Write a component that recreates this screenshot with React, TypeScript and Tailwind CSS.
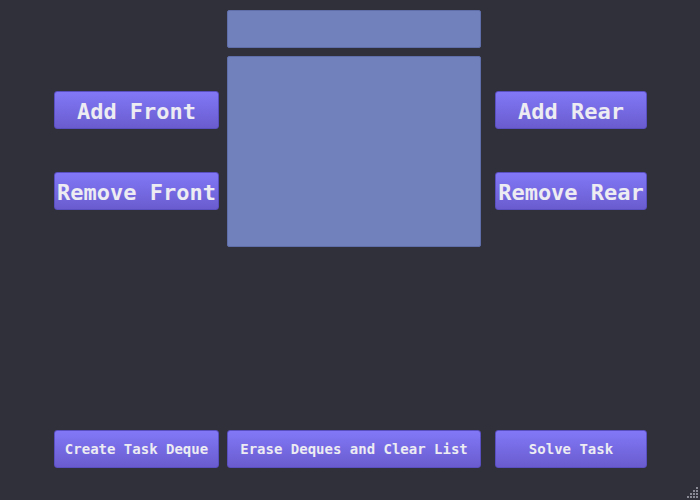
import React from 'react';

const mono = { fontFamily: '"DejaVu Sans Mono", "Liberation Mono", monospace' };

function DequeButton({
  label,
  width,
  size = 'lg',
}: {
  label: string;
  width: string;
  size?: 'lg' | 'sm';
}) {
  return (
    <button
      style={mono}
      className={`${width} flex h-[38px] items-center justify-center whitespace-nowrap rounded-[3px] border border-[#5a4fc0] bg-gradient-to-b from-[#8278f7] to-[#6a5ccf] font-bold text-[#ececf2] ${
        size === 'lg' ? 'pt-[2px] text-[22px]' : 'text-[14px]'
      }`}
    >
      {label}
    </button>
  );
}

function ResizeGrip() {
  const dots: [number, number][] = [];
  for (let r = 0; r < 4; r++) {
    for (let c = 3 - r; c < 4; c++) dots.push([c * 3, r * 3]);
  }
  return (
    <svg width="12" height="12" className="absolute bottom-[1px] right-[1px]">
      {dots.map(([x, y], i) => (
        <rect key={i} x={x} y={y} width="2" height="2" fill="#8a8a96" />
      ))}
    </svg>
  );
}

export default function App() {
  return (
    <div className="relative flex h-[500px] w-[700px] flex-col bg-[#30303a]">
      <div className="flex pl-[54px] pt-[10px]">
        <div className="flex flex-col gap-[43px] pt-[81px]">
          <DequeButton label="Add Front" width="w-[165px]" />
          <DequeButton label="Remove Front" width="w-[165px]" />
        </div>

        <div className="ml-[8px] flex flex-col gap-[8px]">
          <div className="h-[38px] w-[254px] rounded-[2px] border border-[#5f6ea8] bg-[#7181bb]" />
          <div className="h-[191px] w-[254px] rounded-[2px] border border-[#5f6ea8] bg-[#7181bb]" />
        </div>

        <div className="ml-[14px] flex flex-col gap-[43px] pt-[81px]">
          <DequeButton label="Add Rear" width="w-[152px]" />
          <DequeButton label="Remove Rear" width="w-[152px]" />
        </div>
      </div>

      <div className="mt-auto flex pb-[32px] pl-[54px]">
        <DequeButton label="Create Task Deque" width="w-[165px]" size="sm" />
        <div className="ml-[8px]">
          <DequeButton label="Erase Deques and Clear List" width="w-[254px]" size="sm" />
        </div>
        <div className="ml-[14px]">
          <DequeButton label="Solve Task" width="w-[152px]" size="sm" />
        </div>
      </div>

      <ResizeGrip />
    </div>
  );
}
